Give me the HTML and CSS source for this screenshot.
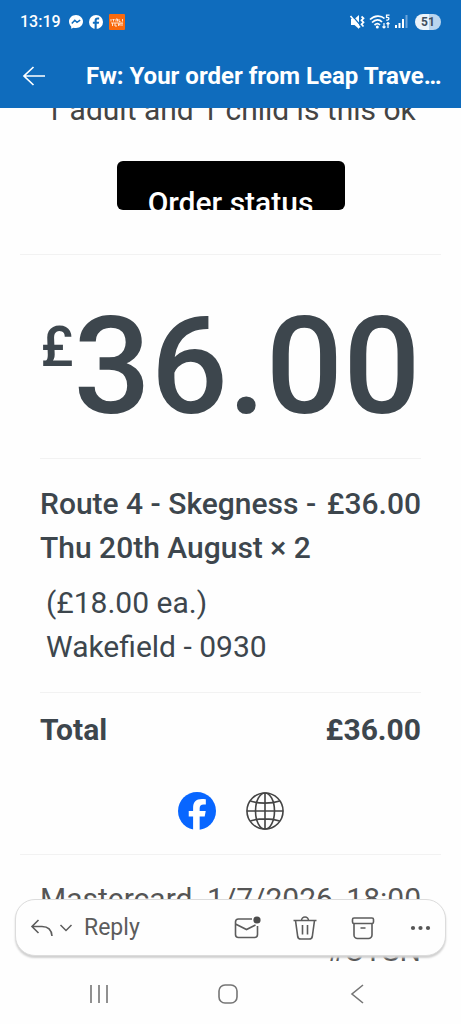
FILE: index.html
```html
<!DOCTYPE html>
<html lang="en">
<head>
<meta charset="utf-8">
<meta name="viewport" content="width=device-width, initial-scale=1">
<title>Fw: Your order from Leap Travel</title>
<link rel="stylesheet" href="styles.css">
</head>
<body>
<header class="top">
  <div class="status">
    <time class="clock">13:19</time>
    <svg class="chip" viewBox="0 0 14 14" aria-hidden="true"><path fill="#fff" d="M7 0C3 0 0 2.900 0 6.600c0 2 .9 3.700 2.200 4.900v2.300l2.300-1.100c.8.200 1.600.4 2.500.4 4 0 7-2.900 7-6.500S11 0 7 0z"/><path d="M2.800 8.500 5.800 5.300 8 7.300l3.200-2.200" fill="none" stroke="#0f6cbd" stroke-width="1.500"/></svg>
    <svg class="chip" viewBox="0 0 40 40" aria-hidden="true"><circle cx="20" cy="20" r="20" fill="#fff"/><path fill="#0f6cbd" d="M16 40V25h-5v-6h5v-3c0-6 3-9 9-9h4v6h-3c-3 0-4 1-4 3v3h7l-1 6h-6v15z"/></svg>
    <svg class="chip-app" viewBox="0 0 16 16" aria-hidden="true"><rect width="16" height="16" rx="1" fill="#f96a0e"/><path d="M2 5v2.500M3.500 5.500h2M4.500 5v2.500M7 7.500V5h1.500v2.500M10 5v2.500h1.500M13.500 5v2.500M2 9h12M3.500 9v3M6 9v3h2M9.500 12V9.500l1.500 2V9M13 9v3" fill="none" stroke="#ffe3cf" stroke-width="1"/></svg>
    <span class="spacer"></span>
    <svg class="sig" viewBox="0 0 60 16" aria-hidden="true">
      <path fill="#fff" d="M2 5h3.500L10 1v14l-4.500-4H2z"/>
      <path d="M2.500 1 13 13" stroke="#0f6cbd" stroke-width="1.200"/>
      <g fill="none" stroke="#fff" stroke-width="1.700">
        <path d="M1.500 2 11 13.500M12.500 2.500l2 1.800-2 2 2 2-2 2 2 2.200"/>
        <path d="M21 5.500c4.500-4.400 11-4.400 14.500-1M23 8.500c3.500-3.400 7.500-3.400 10-.5M25.500 11c2-1.800 3.800-1.800 5.500 0"/>
        <path d="M40.500 1.200h-3v2.300c3-.8 3.600 2.800-.3 2.600M35 9v5M33.500 12.500l1.500 1.500 1.500-1.500M39 14V8.500M37.500 10 39 8.500l1.500 1.500" stroke-width="1.200"/>
      </g>
      <circle cx="28.300" cy="13" r="1.500" fill="#fff"/>
      <path d="M47 14v-3M50.500 14V9M54 14V5" stroke="#fff" stroke-width="2"/><path d="M57.500 14V1" stroke="#6ba4db" stroke-width="2"/>
    </svg>
    <span class="battery">51</span>
  </div>
  <div class="titlebar">
    <button class="plain" type="button" aria-label="Back"><svg class="back" viewBox="0 0 24 22" aria-hidden="true"><path d="M11.500 2 2 11l9.500 9M2 11h21" fill="none" stroke="#fff" stroke-width="1.700"/></svg></button>
    <h1 class="subject">Fw: Your order from Leap Travel - Confirmation</h1>
  </div>
</header>

<main class="view">
  <article class="mail">
    <p class="note">1 adult and 1 child is this ok</p>
    <a class="cta" href="#order">Order status</a>
    <section class="receipt" id="order">
      <p class="amount"><span class="pound">£</span>36.00</p>
      <div class="items">
        <div class="row strong"><span>Route 4 - Skegness - Thu 20th August × 2</span><span>£36.00</span></div>
        <p class="detail">(£18.00 ea.)<br>Wakefield - 0930</p>
      </div>
      <div class="row total"><span>Total</span><span>£36.00</span></div>
      <div class="social">
        <a class="soc" href="#facebook" aria-label="Facebook"><svg viewBox="0 0 40 40"><circle cx="20" cy="20" r="20" fill="#0866ff"/><path fill="#fff" d="M15.900 40V25.700h-4.600v-5.800h4.600v-3c0-6.500 3-9.600 9.300-9.600 1.200 0 3.200.2 4.100.4v5.500c-.4 0-1.200-.1-2.200-.1-3.100 0-4.300 1.200-4.300 4.200v2.600h6.400l-1.100 5.800h-5.300V40z"/></svg></a>
        <a class="soc" href="#website" aria-label="Website"><svg viewBox="0 0 40 40"><g fill="none" stroke="#444" stroke-width="1.700"><circle cx="20" cy="20" r="19"/><ellipse cx="20" cy="20" rx="10" ry="19"/><path d="M20 1v38M1 20h38M4.500 9.500c9 3 22 3 31 0M4.500 30.500c9-3 22-3 31 0"/></g></svg></a>
      </div>
    </section>
    <section class="payment">
      <span>Mastercard</span><span>1/7/2026, 18:00</span><span class="ref">#UTSN</span>
    </section>
  </article>
  <div class="actions">
    <button class="plain reply" type="button">
      <svg class="ic-reply" viewBox="0 0 24 20" aria-hidden="true"><path d="M8.500 2 2 8.500 8.500 15M2 8.500h10c6 0 9.500 3.500 10 9.500" fill="none" stroke="#5c5c5c" stroke-width="1.600"/></svg>
      <svg class="ic-chev" viewBox="0 0 14 10" aria-hidden="true"><path d="M1.500 2 7 7.500 12.500 2" fill="none" stroke="#5c5c5c" stroke-width="1.500"/></svg>
      <span>Reply</span>
    </button>
    <span class="spacer"></span>
    <button class="plain" type="button" aria-label="Mark unread"><svg class="ic" viewBox="0 0 28 28" aria-hidden="true"><g fill="none" stroke="#5c5c5c" stroke-width="1.600"><path d="M19 5H5.500A3 3 0 0 0 2.500 8v12.500a3 3 0 0 0 3 3h16a3 3 0 0 0 3-3V12M2.500 10l11 5.500 9-4.500"/></g><circle cx="24" cy="6" r="3.600" fill="#4c4c4c"/></svg></button>
    <button class="plain" type="button" aria-label="Delete"><svg class="ic" viewBox="0 0 28 28" aria-hidden="true"><g fill="none" stroke="#5c5c5c" stroke-width="1.600"><path d="M2.500 6.500h23M4.500 6.500l2.200 16a3 3 0 0 0 3 2.500h8.600a3 3 0 0 0 3-2.500l2.200-16M10.500 6.500a3.500 3.500 0 0 1 7 0M11.500 11v9.500M16.500 11v9.500"/></g></svg></button>
    <button class="plain" type="button" aria-label="Archive"><svg class="ic" viewBox="0 0 28 28" aria-hidden="true"><g fill="none" stroke="#5c5c5c" stroke-width="1.600"><rect x="3.500" y="4" width="21" height="5.500" rx="1.500"/><path d="M5 9.500V21a3.500 3.500 0 0 0 3.500 3.500h11A3.500 3.500 0 0 0 23 21V9.500M11.500 14h5"/></g></svg></button>
    <button class="plain" type="button" aria-label="More"><svg class="ic" viewBox="0 0 28 28" aria-hidden="true"><g fill="#555"><circle cx="6" cy="14" r="2.100"/><circle cx="13.500" cy="14" r="2.100"/><circle cx="21" cy="14" r="2.100"/></g></svg></button>
  </div>
</main>

<nav class="sysnav" aria-label="System">
  <button class="plain" type="button" aria-label="Recents"><svg class="nv" viewBox="0 0 24 24" aria-hidden="true"><path d="M4 3v18M12 3v18M20 3v18" stroke="#757575" stroke-width="1.600"/></svg></button>
  <button class="plain" type="button" aria-label="Home"><svg class="nv" viewBox="0 0 24 24" aria-hidden="true"><rect x="3" y="3" width="18" height="18" rx="6" fill="none" stroke="#757575" stroke-width="1.600"/></svg></button>
  <button class="plain" type="button" aria-label="Back"><svg class="nv" viewBox="0 0 24 24" aria-hidden="true"><path d="M18 3 7 12l11 9" fill="none" stroke="#757575" stroke-width="1.600"/></svg></button>
</nav>
</body>
</html>
```

FILE: styles.css
```css
* { box-sizing: border-box; }
body {
  margin: 0;
  height: 100vh;
  display: flex;
  flex-direction: column;
  background: #fefefe;
  color: #3d464d;
  font-family: Roboto, "Liberation Sans", sans-serif;
}
p, h1 { margin: 0; }
.plain {
  display: flex;
  align-items: center;
  padding: 0;
  border: 0;
  background: none;
  color: inherit;
  font: inherit;
}
.plain svg, .soc svg { display: block; }
.spacer { flex: 1; }

/* Header */
.top { flex: none; background: #0f6cbd; color: #fff; }
.status {
  display: flex;
  align-items: center;
  gap: 6px;
  height: 43px;
  padding: 0 20px;
}
.clock { margin-right: 2px; font-size: 16px; font-weight: 500; line-height: 20px; }
.chip { width: 14px; height: 14px; }
.chip-app { width: 16px; height: 16px; }
.sig { width: 60px; height: 16px; }
.battery {
  width: 26px;
  border-radius: 8px;
  background: linear-gradient(90deg, #eaf3fb 52%, #b9d5ef 52%);
  color: #3f4f60;
  font-size: 12px;
  font-weight: 700;
  line-height: 16px;
  text-align: center;
}
.titlebar {
  display: flex;
  align-items: center;
  gap: 40px;
  height: 65px;
  padding: 0 16px 0 22px;
}
.back { width: 24px; height: 22px; }
.subject {
  flex: 1;
  min-width: 0;
  overflow: hidden;
  font-size: 24px;
  font-weight: 700;
  line-height: 32px;
  text-overflow: ellipsis;
  white-space: nowrap;
}

/* Message */
.view { position: relative; flex: 1; min-height: 0; overflow: hidden; }
.mail {
  display: flex;
  flex-direction: column;
  margin-top: -20px;
  padding: 0 20px;
  font-size: 30px;
  line-height: 44px;
}
.note { color: #444; text-align: center; }
.cta {
  align-self: center;
  width: 228px;
  height: 49px;
  margin: 29px 0 44px;
  padding-top: 20px;
  overflow: hidden;
  border-radius: 6px;
  background: #000;
  color: #fff;
  font-weight: 500;
  text-align: center;
  text-decoration: none;
}
.receipt {
  padding: 0 20px;
  border-top: 1px solid #f2f2f2;
  border-bottom: 1px solid #f2f2f2;
}
.amount {
  display: flex;
  justify-content: center;
  padding: 32px 0 11px;
  border-bottom: 1px solid #f2f2f2;
  font-size: 136px;
  font-weight: 500;
  line-height: 160px;
}
.pound { padding-top: 28px; font-size: 56px; line-height: 64px; }
.items { padding: 23px 0 23px; border-bottom: 1px solid #f2f2f2; }
.row { display: flex; justify-content: space-between; }
.strong { font-weight: 500; }
.detail { padding: 11px 6px 0; }
.total { padding-top: 15px; font-weight: 700; }
.social { display: flex; justify-content: center; gap: 30px; padding: 40px 0 24px; }
.soc { width: 38px; height: 38px; }
.payment {
  display: flex;
  flex-wrap: wrap;
  justify-content: space-between;
  gap: 8px 0;
  padding: 22px 20px 0;
  color: #555;
}
.ref { margin-left: auto; }

/* Floating action bar */
.actions {
  position: absolute;
  right: 15px;
  bottom: 8px;
  left: 15px;
  display: flex;
  align-items: center;
  gap: 30px;
  height: 57px;
  padding: 0 10px 0 14px;
  border: 1px solid #dcdcdc;
  border-radius: 20px;
  background: #fefefe;
  box-shadow: 0 2px 2px #d0d0d0;
  color: #5c5c5c;
}
.reply { gap: 5px; font-size: 23px; line-height: 28px; }
.reply span { padding-left: 6px; }
.ic-reply { width: 24px; height: 20px; }
.ic-chev { width: 14px; height: 10px; }
.ic { width: 28px; height: 28px; }

/* System navigation */
.sysnav {
  display: flex;
  flex: none;
  align-items: center;
  justify-content: space-between;
  height: 60px;
  padding: 0 92px 0 87px;
}
.nv { width: 24px; height: 24px; }
```
